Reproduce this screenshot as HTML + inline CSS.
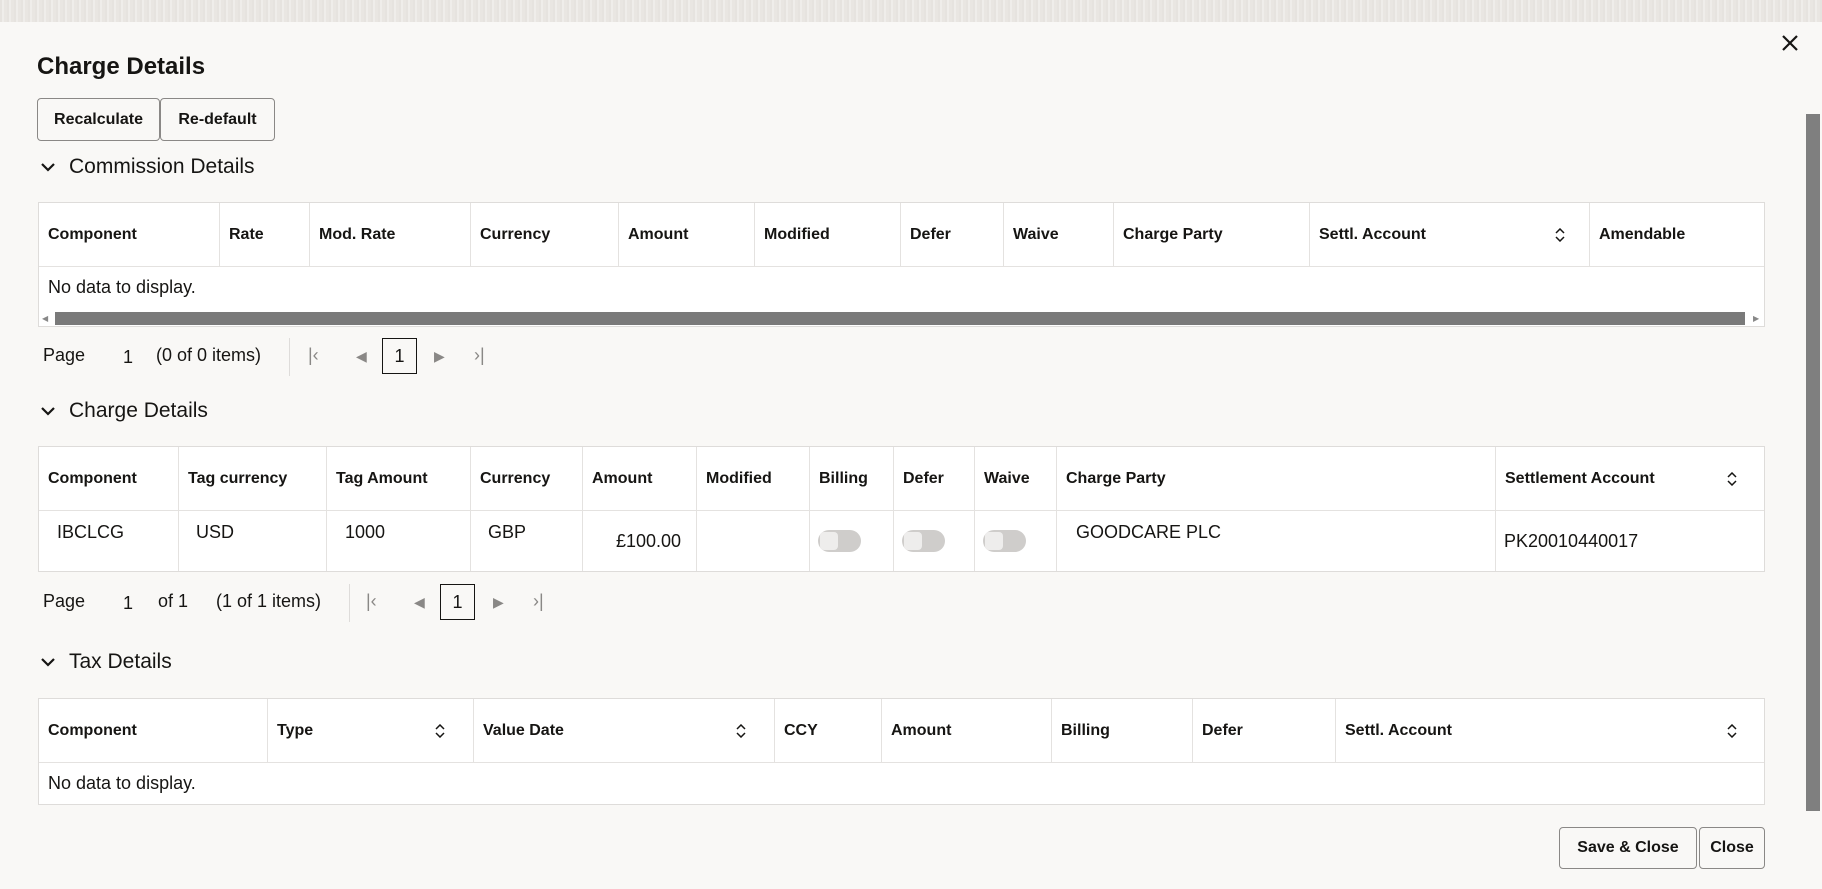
<!DOCTYPE html>
<html><head><meta charset="utf-8"><style>
*{box-sizing:border-box;margin:0;padding:0}
body{width:1822px;height:889px;overflow:hidden;background:#f9f8f6;font-family:"Liberation Sans",sans-serif;color:#161513;position:relative}
.strip{position:absolute;left:0;top:0;width:1822px;height:22px;background:repeating-linear-gradient(90deg,#e6e3df 0 2px,#efedea 2px 4px,#e9e6e2 4px 7px)}
.abs{position:absolute}
h1{position:absolute;left:37px;top:53px;font-size:24px;font-weight:bold}
.btn{position:absolute;top:98px;height:43px;border:1px solid #8a8886;border-radius:4px;background:#f9f8f6;font-size:16px;font-weight:bold;display:flex;align-items:center;justify-content:center;color:#161513}
.sec{position:absolute;left:40px;font-size:21px;display:flex;align-items:center}
.sec svg{margin-right:13px}
.tbl{position:absolute;left:38px;width:1727px;background:#fff;border:1px solid #dedcda}
.cell{position:absolute;top:0;border-left:1px solid #e4e2e0;font-size:16px;font-weight:bold;display:flex;align-items:center;padding-left:9px}
.vl{position:absolute;top:0;width:1px;background:#e4e2e0}
.row{position:absolute;left:0;right:0;border-top:1px solid #e4e2e0}
.pg{position:absolute;font-size:18px;color:#161513}
.box{position:absolute;border:1px solid #161513;width:35px;height:36px;display:flex;align-items:center;justify-content:center;font-size:18px}
.tg{position:absolute;width:43px;height:22px;border-radius:11px;background:#cfcdcb}
.tg::after{content:"";position:absolute;left:2px;top:2px;width:18px;height:18px;border-radius:4px;background:#eeedec}
.sort{position:absolute}
</style></head><body>
<div class="strip"></div>
<h1>Charge Details</h1>
<svg class="abs" style="left:1781px;top:34px" width="18" height="18" viewBox="0 0 18 18"><path d="M2 2L16 16M16 2L2 16" stroke="#161513" stroke-width="2.2"/></svg>
<div class="abs" style="left:1806px;top:114px;width:14px;height:697px;background:#7f7f7f"></div>
<div class="btn" style="left:37px;width:123px">Recalculate</div>
<div class="btn" style="left:160px;width:115px">Re-default</div>

<div class="sec" style="top:155px"><svg width="16" height="10" viewBox="0 0 16 10"><path d="M2 2l6 6 6-6" fill="none" stroke="#161513" stroke-width="2.2"/></svg>Commission Details</div>
<div class="tbl" style="top:202px;height:125px">
 <div class="cell" style="left:0;width:180px;height:63px;border-left:none">Component</div>
 <div class="cell" style="left:180px;height:63px">Rate</div>
 <div class="cell" style="left:270px;height:63px">Mod. Rate</div>
 <div class="cell" style="left:431px;height:63px">Currency</div>
 <div class="cell" style="left:579px;height:63px">Amount</div>
 <div class="cell" style="left:715px;height:63px">Modified</div>
 <div class="cell" style="left:861px;height:63px">Defer</div>
 <div class="cell" style="left:964px;height:63px">Waive</div>
 <div class="cell" style="left:1074px;height:63px">Charge Party</div>
 <div class="cell" style="left:1270px;height:63px">Settl. Account</div>
 <div class="cell" style="left:1550px;height:63px">Amendable</div>
 <svg class="sort" style="left:1515px;top:25px" width="12" height="14" viewBox="0 0 12 14"><path d="M2 5l4-4 4 4M2 9l4 4 4-4" fill="none" stroke="#161513" stroke-width="1.5"/></svg>
 <div class="row" style="top:63px;height:44px;font-size:18px;padding:10px 9px">No data to display.</div>
 <div class="abs" style="left:16px;top:109px;width:1690px;height:13px;background:#7a7a7a"></div>
 <div class="abs" style="left:3px;top:111px;font-size:8px;color:#888">◀</div>
 <div class="abs" style="left:1714px;top:111px;font-size:8px;color:#888">▶</div>
</div>
<div class="pg" style="left:43px;top:345px">Page</div>
<div class="pg" style="left:123px;top:347px">1</div>
<div class="pg" style="left:156px;top:345px">(0 of 0 items)</div>
<div class="abs" style="left:289px;top:338px;width:1px;height:38px;background:#dedcda"></div>
<div class="pg" style="left:308px;top:345px;color:#8a8886">|&lsaquo;</div>
<div class="pg" style="left:356px;top:348px;color:#8a8886;font-size:14px">◀</div>
<div class="box" style="left:382px;top:338px">1</div>
<div class="pg" style="left:434px;top:348px;color:#8a8886;font-size:14px">▶</div>
<div class="pg" style="left:474px;top:345px;color:#8a8886">&rsaquo;|</div>

<div class="sec" style="top:399px"><svg width="16" height="10" viewBox="0 0 16 10"><path d="M2 2l6 6 6-6" fill="none" stroke="#161513" stroke-width="2.2"/></svg>Charge Details</div>
<div class="tbl" style="top:446px;height:126px">
 <div class="cell" style="left:0;height:63px;border-left:none">Component</div>
 <div class="cell" style="left:139px;height:63px">Tag currency</div>
 <div class="cell" style="left:287px;height:63px">Tag Amount</div>
 <div class="cell" style="left:431px;height:63px">Currency</div>
 <div class="cell" style="left:543px;height:63px">Amount</div>
 <div class="cell" style="left:657px;height:63px">Modified</div>
 <div class="cell" style="left:770px;height:63px">Billing</div>
 <div class="cell" style="left:854px;height:63px">Defer</div>
 <div class="cell" style="left:935px;height:63px">Waive</div>
 <div class="cell" style="left:1017px;height:63px">Charge Party</div>
 <div class="cell" style="left:1456px;height:63px">Settlement Account</div>
 <div class="vl" style="left:139px;height:124px"></div><div class="vl" style="left:287px;height:124px"></div>
 <div class="vl" style="left:431px;height:124px"></div><div class="vl" style="left:543px;height:124px"></div>
 <div class="vl" style="left:657px;height:124px"></div><div class="vl" style="left:770px;height:124px"></div>
 <div class="vl" style="left:854px;height:124px"></div><div class="vl" style="left:935px;height:124px"></div>
 <div class="vl" style="left:1017px;height:124px"></div><div class="vl" style="left:1456px;height:124px"></div>
 <svg class="sort" style="left:1687px;top:25px" width="12" height="14" viewBox="0 0 12 14"><path d="M2 5l4-4 4 4M2 9l4 4 4-4" fill="none" stroke="#161513" stroke-width="1.5"/></svg>
 <div class="row" style="top:63px"></div>
 <div class="pg" style="left:18px;top:75px">IBCLCG</div>
 <div class="pg" style="left:157px;top:75px">USD</div>
 <div class="pg" style="left:306px;top:75px">1000</div>
 <div class="pg" style="left:449px;top:75px">GBP</div>
 <div class="pg" style="left:577px;top:84px">£100.00</div>
 <div class="tg" style="left:779px;top:83px"></div>
 <div class="tg" style="left:863px;top:83px"></div>
 <div class="tg" style="left:944px;top:83px"></div>
 <div class="pg" style="left:1037px;top:75px">GOODCARE PLC</div>
 <div class="pg" style="left:1465px;top:84px">PK20010440017</div>
</div>
<div class="pg" style="left:43px;top:591px">Page</div>
<div class="pg" style="left:123px;top:593px">1</div>
<div class="pg" style="left:158px;top:591px">of 1</div>
<div class="pg" style="left:216px;top:591px">(1 of 1 items)</div>
<div class="abs" style="left:349px;top:584px;width:1px;height:38px;background:#dedcda"></div>
<div class="pg" style="left:366px;top:591px;color:#8a8886">|&lsaquo;</div>
<div class="pg" style="left:414px;top:594px;color:#8a8886;font-size:14px">◀</div>
<div class="box" style="left:440px;top:584px">1</div>
<div class="pg" style="left:493px;top:594px;color:#8a8886;font-size:14px">▶</div>
<div class="pg" style="left:533px;top:591px;color:#8a8886">&rsaquo;|</div>

<div class="sec" style="top:650px"><svg width="16" height="10" viewBox="0 0 16 10"><path d="M2 2l6 6 6-6" fill="none" stroke="#161513" stroke-width="2.2"/></svg>Tax Details</div>
<div class="tbl" style="top:698px;height:107px">
 <div class="cell" style="left:0;height:63px;border-left:none">Component</div>
 <div class="cell" style="left:228px;height:63px">Type</div>
 <div class="cell" style="left:434px;height:63px">Value Date</div>
 <div class="cell" style="left:735px;height:63px">CCY</div>
 <div class="cell" style="left:842px;height:63px">Amount</div>
 <div class="cell" style="left:1012px;height:63px">Billing</div>
 <div class="cell" style="left:1153px;height:63px">Defer</div>
 <div class="cell" style="left:1296px;height:63px">Settl. Account</div>
 <svg class="sort" style="left:395px;top:25px" width="12" height="14" viewBox="0 0 12 14"><path d="M2 5l4-4 4 4M2 9l4 4 4-4" fill="none" stroke="#161513" stroke-width="1.5"/></svg>
 <svg class="sort" style="left:696px;top:25px" width="12" height="14" viewBox="0 0 12 14"><path d="M2 5l4-4 4 4M2 9l4 4 4-4" fill="none" stroke="#161513" stroke-width="1.5"/></svg>
 <svg class="sort" style="left:1687px;top:25px" width="12" height="14" viewBox="0 0 12 14"><path d="M2 5l4-4 4 4M2 9l4 4 4-4" fill="none" stroke="#161513" stroke-width="1.5"/></svg>
 <div class="row" style="top:63px;height:43px;font-size:18px;padding:10px 9px">No data to display.</div>
</div>

<div class="btn" style="left:1559px;top:827px;width:138px;height:42px">Save &amp; Close</div>
<div class="btn" style="left:1699px;top:827px;width:66px;height:42px">Close</div>
</body></html>
